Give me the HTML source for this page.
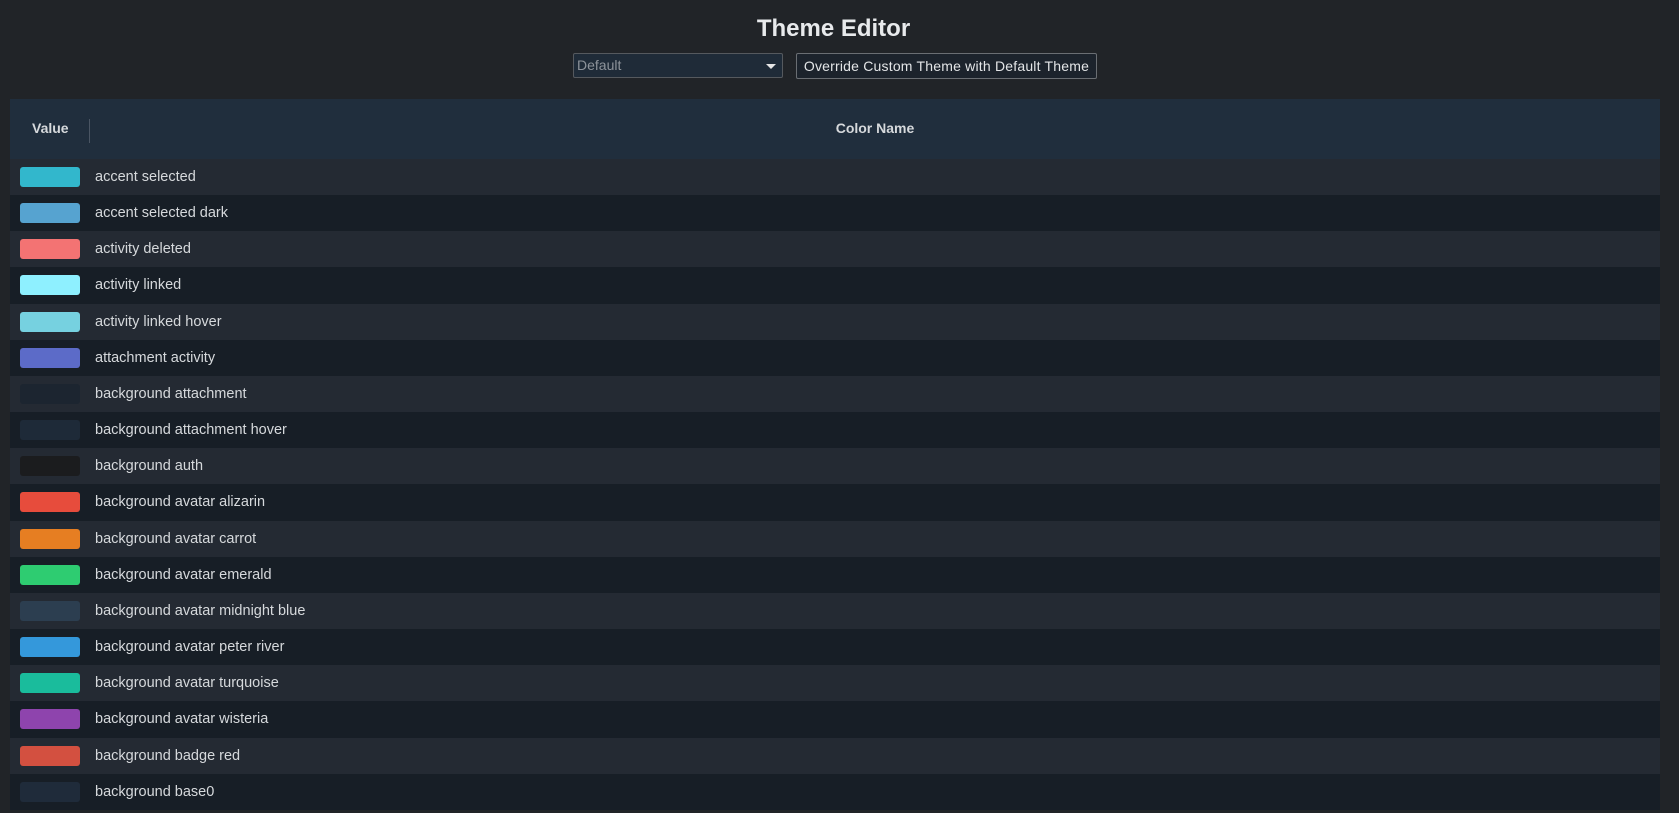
<!DOCTYPE html>
<html><head><style>
html,body{margin:0;padding:0;background:#212428;width:1679px;height:813px;overflow:hidden;font-family:"Liberation Sans",sans-serif;color:#d6d9dc}
h1{position:absolute;left:-6px;width:1679px;top:15px;margin:0;text-align:center;font-size:24px;font-weight:bold;color:#e8eaec}
.sel{position:absolute;left:573px;top:53px;width:210px;height:25px;border:1px solid #55595e;border-radius:2px;background:#1f2b38;color:#8d939a;font-size:14px;line-height:23px;box-sizing:border-box;padding-left:3px}
.sel:after{content:"";position:absolute;right:6px;top:10px;border:5px solid transparent;border-top:5px solid #e6e6e6}
.btn{position:absolute;left:796px;top:53px;width:301px;height:26px;border:1px solid #6a6e73;border-radius:2px;background:#1c232c;color:#e3e5e7;font-size:14px;line-height:24px;box-sizing:border-box;text-align:center;white-space:nowrap;letter-spacing:0.2px}
.hdr{position:absolute;left:10px;top:99px;width:1650px;height:60px;background:#202e3d;font-weight:bold;font-size:14px;color:#d6d9dc}
.hdr .v{position:absolute;left:22px;top:21px}
.hdr .sep{position:absolute;left:79px;top:20px;width:1px;height:24px;background:#4a5563}
.hdr .c{position:absolute;left:0;width:1730px;text-align:center;top:21px}
.rows{position:absolute;left:10px;top:159px;width:1650px}
.r{height:36.17px;position:relative;font-size:14.5px}
.r:nth-child(odd){background:#242a33}
.r:nth-child(even){background:#171e26}
.sw{position:absolute;left:10px;top:8px;width:60px;height:20px;border-radius:3px}
.t{position:absolute;left:85px;top:10px}
</style></head><body>
<h1>Theme Editor</h1>
<div class="sel">Default</div>
<div class="btn">Override Custom Theme with Default Theme</div>
<div class="hdr"><span class="v">Value</span><div class="sep"></div><span class="c">Color Name</span></div>
<div class="rows">
<div class="r"><div class="sw" style="background:#32b7cc"></div><span class="t">accent selected</span></div>
<div class="r"><div class="sw" style="background:#56a3d0"></div><span class="t">accent selected dark</span></div>
<div class="r"><div class="sw" style="background:#f37373"></div><span class="t">activity deleted</span></div>
<div class="r"><div class="sw" style="background:#8ef0ff"></div><span class="t">activity linked</span></div>
<div class="r"><div class="sw" style="background:#76d1e0"></div><span class="t">activity linked hover</span></div>
<div class="r"><div class="sw" style="background:#5c6bc8"></div><span class="t">attachment activity</span></div>
<div class="r"><div class="sw" style="background:#1c2530"></div><span class="t">background attachment</span></div>
<div class="r"><div class="sw" style="background:#1e2a38"></div><span class="t">background attachment hover</span></div>
<div class="r"><div class="sw" style="background:#1b1c1e"></div><span class="t">background auth</span></div>
<div class="r"><div class="sw" style="background:#e74c3c"></div><span class="t">background avatar alizarin</span></div>
<div class="r"><div class="sw" style="background:#e67e22"></div><span class="t">background avatar carrot</span></div>
<div class="r"><div class="sw" style="background:#2ecc71"></div><span class="t">background avatar emerald</span></div>
<div class="r"><div class="sw" style="background:#2c3e50"></div><span class="t">background avatar midnight blue</span></div>
<div class="r"><div class="sw" style="background:#3498db"></div><span class="t">background avatar peter river</span></div>
<div class="r"><div class="sw" style="background:#1abc9c"></div><span class="t">background avatar turquoise</span></div>
<div class="r"><div class="sw" style="background:#8e44ad"></div><span class="t">background avatar wisteria</span></div>
<div class="r"><div class="sw" style="background:#d35040"></div><span class="t">background badge red</span></div>
<div class="r"><div class="sw" style="background:#1f2b3a"></div><span class="t">background base0</span></div>
</div>
</body></html>
